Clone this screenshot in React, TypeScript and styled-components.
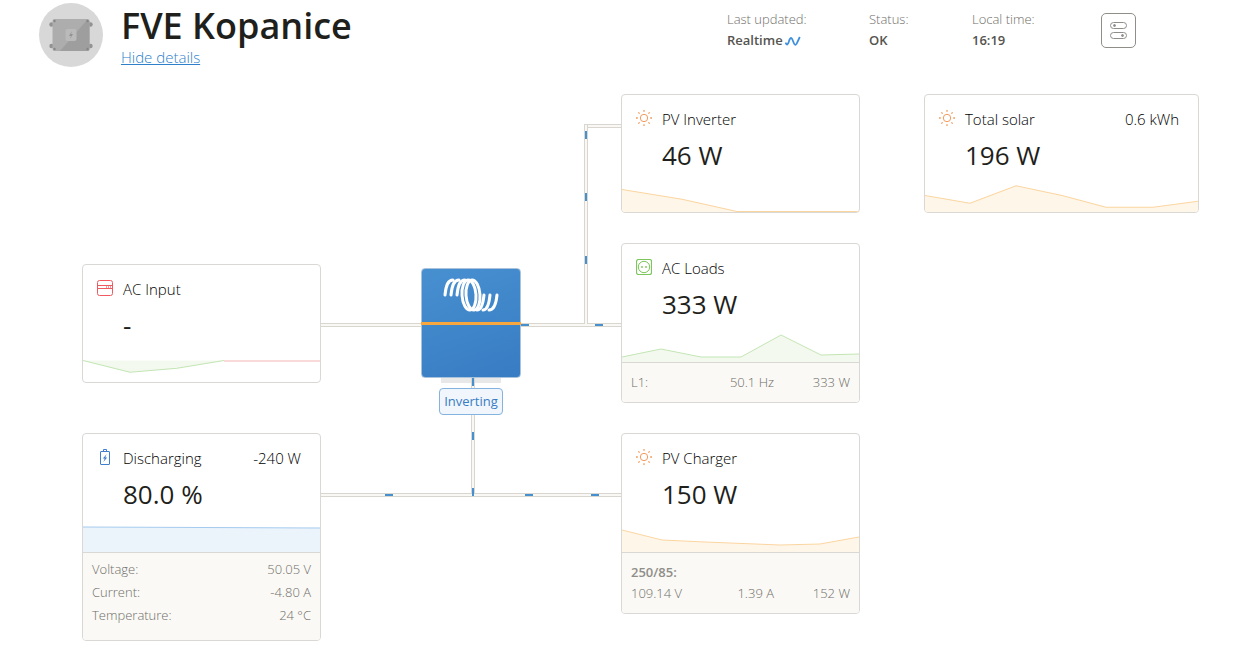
import React from "react";
import styled, { createGlobalStyle } from "styled-components";

const c = {
  text: "#1f1f1c",
  muted: "#6f6e69",
  dark: "#55544f",
  border: "#d9d8d5",
  footer: "#faf9f5",
  blue: "#4790d0",
};

const Global = createGlobalStyle`
  *, *::before, *::after { box-sizing: border-box; }
  body {
    margin: 0;
    background: #fff;
    color: ${c.text};
    font-family: "Open Sans", "Noto Sans", sans-serif;
  }
`;

const Header = styled.header`
  display: flex;
  justify-content: space-between;
  align-items: flex-start;
  padding: 3px 106px 0 39px;
`;

const Site = styled.div`
  display: flex;
  gap: 18px;
`;

const Title = styled.h1`
  margin: 0;
  font-size: 36px;
  line-height: 45px;
  font-weight: 600;
`;

const DetailsLink = styled.a`
  display: block;
  font-size: 15px;
  line-height: 19px;
  color: #2f7fcb;
  font-weight: 300;
`;

const Meta = styled.div`
  display: flex;
  padding-top: 6px;
`;

const MetaList = styled.dl`
  display: grid;
  grid-template-columns: 142px 103px 129px;
  margin: 0;
`;

const MetaItem = styled.div`
  font-size: 13px;
  line-height: 21px;
`;

const MetaLabel = styled.dt`
  color: ${c.muted};
  font-weight: 300;
`;

const MetaValue = styled.dd`
  display: flex;
  align-items: center;
  gap: 2px;
  margin: 0;
  font-weight: 600;
  color: ${c.dark};
`;

const ToggleButton = styled.button`
  display: grid;
  place-items: center;
  width: 35px;
  height: 35px;
  margin-top: 4px;
  padding: 0;
  border: 1px solid #8f8e89;
  border-radius: 5px;
  background: #fff;
`;

const Diagram = styled.main`
  display: grid;
  grid-template-columns: 239fr 300fr 239fr 64fr 275fr;
  padding: 27px 43px 15px 82px;
`;

const Column = styled.div<{ $offset?: number; $gap?: number }>`
  display: flex;
  flex-direction: column;
  gap: ${(p) => p.$gap ?? 0}px;
  padding-top: ${(p) => p.$offset ?? 0}px;
`;

const Card = styled.section`
  border: 1px solid ${c.border};
  border-radius: 4px;
  background: #fff;
  overflow: hidden;
`;

const Face = styled.div`
  display: flex;
  flex-direction: column;
  height: 118px;
  &:last-child {
    height: 117px;
  }
`;

const CardHead = styled.div`
  display: flex;
  align-items: flex-start;
  gap: 10px;
  padding: 13px 19px 0 14px;
  line-height: 22px;
  svg {
    flex: none;
    margin-top: 2px;
  }
`;

const CardTitle = styled.h2`
  flex: 1;
  margin: 0;
  font-size: 15px;
  font-weight: 300;
  color: #000;
`;

const CardExtra = styled.span`
  font-size: 15px;
  font-weight: 300;
  color: #000;
`;

const CardValue = styled.div`
  padding-left: 40px;
  font-size: 26px;
  line-height: 36px;
  margin-top: 7px;
`;

const ChartSvg = styled.svg`
  display: block;
  width: 100%;
  height: 40px;
  margin-top: auto;
`;

const Foot = styled.div<{ $top: number; $bottom: number }>`
  padding: ${(p) => p.$top}px 9px ${(p) => p.$bottom}px;
  border-top: 1px solid ${c.border};
  background: ${c.footer};
`;

const Readings = styled.table<{ $row: number }>`
  width: 100%;
  border-collapse: collapse;
  font-size: 13px;
  line-height: ${(p) => p.$row}px;
  color: ${c.muted};
  th,
  td {
    padding: 0;
    font-weight: 300;
    text-align: right;
  }
  th:first-child,
  td:first-child {
    text-align: left;
  }
  th:nth-child(3),
  td:nth-child(3) {
    width: 76px;
  }
  caption {
    text-align: left;
    font-weight: 600;
    color: #8f8e89;
  }
`;

const Links = styled.div`
  position: relative;
`;

const Wire = styled.div<{ $vertical?: boolean; $x: string; $y: number; $length: string }>`
  position: absolute;
  left: ${(p) => p.$x};
  top: ${(p) => p.$y}px;
  width: ${(p) => (p.$vertical ? "4px" : p.$length)};
  height: ${(p) => (p.$vertical ? p.$length : "4px")};
  background: #f9f8f4;
  border: 0 solid #d8d6ce;
  border-width: ${(p) => (p.$vertical ? "0 1px" : "1px 0")};
`;

const Pulse = styled.i<{ $vertical?: boolean; $at: string }>`
  position: absolute;
  left: ${(p) => (p.$vertical ? "0" : p.$at)};
  top: ${(p) => (p.$vertical ? p.$at : "0")};
  width: ${(p) => (p.$vertical ? 2 : 8)}px;
  height: ${(p) => (p.$vertical ? 8 : 2)}px;
  background: ${c.blue};
`;

const Inverter = styled.div`
  position: absolute;
  left: calc(50% - 50px);
  top: 174px;
  width: 100px;
  display: flex;
  flex-direction: column;
  align-items: center;
`;

const InverterBox = styled.div`
  width: 100px;
  height: 110px;
  border: 1px solid #a9c3dc;
  border-radius: 4px;
  background: linear-gradient(160deg, #4790d0, #387cc3);
`;

const InverterTop = styled.div`
  display: flex;
  justify-content: center;
  height: 56px;
  margin: 0 -1px;
  padding-top: 9px;
  border-bottom: 3px solid #f7a73e;
`;

const Foothold = styled.div`
  width: 60px;
  height: 5px;
  background: #e8e8e8;
`;

const StateBadge = styled.div`
  position: absolute;
  top: 294px;
  left: calc(50% - 32px);
  width: 64px;
  border: 1px solid #84b3e0;
  border-radius: 4px;
  background: #f0f6fc;
  color: #387cc3;
  font-size: 13px;
  line-height: 25px;
  text-align: center;
`;

type Tone = "orange" | "green" | "blue";
const tones: Record<Tone, [string, string]> = {
  orange: ["#fbd5a0", "#fff6ea"],
  green: ["#c3e5b4", "#f3f9ef"],
  blue: ["#a5cbee", "#ebf3fb"],
};

type Point = [number, number];

interface ChartProps {
  points: Point[];
  tone: Tone;
  width?: number;
  base?: number;
  tail?: string;
}

function Chart({ points, tone, width = 237, base = 40, tail }: ChartProps) {
  const [line, fill] = tones[tone];
  const path = points.map(([x, y]) => `${x},${y}`).join(" ");
  const last = points[points.length - 1][0];
  return (
    <ChartSvg viewBox={`0 0 ${width} 40`} preserveAspectRatio="none" aria-hidden="true">
      <polygon points={`0,${base} ${path} ${last},${base}`} fill={fill} />
      <polyline points={path} fill="none" stroke={line} vectorEffect="non-scaling-stroke" />
      {tail && (
        <line x1={last} x2={width} y1={base + 0.5} y2={base + 0.5} stroke={tail} vectorEffect="non-scaling-stroke" />
      )}
    </ChartSvg>
  );
}

const SunIcon = () => (
  <svg width="16" height="16" viewBox="0 0 16 16" fill="none" stroke="#f29b5c" aria-hidden="true">
    <circle cx="8" cy="8" r="3.7" />
    {[0, 45, 90, 135, 180, 225, 270, 315].map((a) => (
      <path key={a} d="M8 0v1.8" strokeWidth="1.3" transform={`rotate(${a} 8 8)`} />
    ))}
  </svg>
);

const GridIcon = () => (
  <svg width="16" height="16" viewBox="0 0 16 16" fill="none" stroke="#f0595f" aria-hidden="true">
    <rect x=".5" y=".5" width="15" height="15" rx="2" />
    <path d="M.5 5.5h15M.5 8.5h15" />
    <path d="M9.5 6v2M11.5 6v2M13.5 6v2" opacity=".6" />
  </svg>
);

const SocketIcon = () => (
  <svg width="16" height="16" viewBox="0 0 16 16" fill="none" stroke="#7cc65c" aria-hidden="true">
    <rect x=".5" y=".5" width="15" height="15" rx="2" strokeWidth="1.2" />
    <circle cx="8" cy="8" r="5.7" />
    <circle cx="6" cy="8" r=".9" fill="#7cc65c" stroke="none" />
    <circle cx="10" cy="8" r=".9" fill="#7cc65c" stroke="none" />
  </svg>
);

const BatteryIcon = () => (
  <svg width="16" height="16" viewBox="0 0 16 16" fill="none" stroke="#3f7fcd" aria-hidden="true">
    <rect x="3.5" y="2.5" width="9" height="13" rx=".5" />
    <path d="M6.5 2.5v-2h3v2" />
    <path d="M9.6 5.2 5.8 9.6h1.9L6.4 13l3.8-4.6H8.3z" fill="#3f7fcd" stroke="none" />
  </svg>
);

const RealtimeIcon = () => (
  <svg width="16" height="10" viewBox="0 0 16 10" fill="none" stroke="#3f8fdc" strokeWidth="1.8" aria-hidden="true">
    <path d="M.5 6.5C1.8 9.8 3 8.5 3.7 6 4.5 2.7 6 .3 7.4 3.5L8.8 7C10 10 11.5 9 12.4 6L14.8 1" />
  </svg>
);

const SwitchesIcon = () => (
  <svg width="18" height="18" viewBox="0 0 18 18" fill="none" stroke="#8f8e89" aria-hidden="true">
    <rect x=".5" y=".5" width="16" height="6" rx="3" />
    <rect x=".5" y="10.5" width="16" height="6" rx="3" />
    <circle cx="4.5" cy="3.5" r="1" fill="#8f8e89" />
    <circle cx="12.5" cy="13.5" r="1" fill="#8f8e89" />
  </svg>
);

const Avatar = () => (
  <svg width="64" height="64" viewBox="0 0 64 64" aria-hidden="true">
    <circle cx="32" cy="32" r="32" fill="#d8d8d8" />
    <g fill="#929292">
      <circle cx="12.5" cy="21.5" r="2.2" />
      <circle cx="51.5" cy="21.5" r="2.2" />
      <circle cx="12.5" cy="43" r="2.2" />
      <circle cx="51.5" cy="43" r="2.2" />
    </g>
    <rect x="13.5" y="16" width="37" height="32" rx="2" fill="#adadad" />
    <path d="M50.5 18v28a2 2 0 0 1-2 2H21L48 17z" fill="#9e9e9e" />
    <rect x="26.5" y="26" width="11" height="12" rx="2" fill="#bababa" />
    <path d="M33 28l-3 5h2l-1 3 3-5h-2z" fill="#929292" />
    <g fill="#858585">
      <circle cx="15.5" cy="18" r="1.2" />
      <circle cx="48.5" cy="18" r="1.2" />
      <circle cx="15.5" cy="46" r="1.2" />
      <circle cx="48.5" cy="46" r="1.2" />
    </g>
  </svg>
);

const WaveLogo = () => (
  <svg
    width="56"
    height="34"
    viewBox="0 0 56 34"
    fill="none"
    stroke="#fff"
    strokeWidth="3"
    strokeLinecap="round"
    role="img"
    aria-label="Manufacturer logo"
  >
    <path d="M2 17C3 7 5 2 10 2" />
    <path d="M8 17C9 7 11 2 16 2" />
    <path d="M14 17C15 7 17 2 22 2" />
    <ellipse cx="26" cy="17" rx="7" ry="15" transform="rotate(-4 26 17)" />
    <ellipse cx="30" cy="17" rx="7" ry="15" transform="rotate(-4 30 17)" />
    <path d="M34 32c4 0 6-5 7-15" />
    <path d="M40 32c4 0 6-5 7-15" />
    <path d="M46 32c4 0 7-5 8-15" />
  </svg>
);

export default function App() {
  return (
    <>
      <Global />
      <Header>
        <Site>
          <Avatar />
          <div>
            <Title>FVE Kopanice</Title>
            <DetailsLink href="#details">Hide details</DetailsLink>
          </div>
        </Site>
        <Meta>
          <MetaList>
            <MetaItem>
              <MetaLabel>Last updated:</MetaLabel>
              <MetaValue>Realtime <RealtimeIcon /></MetaValue>
            </MetaItem>
            <MetaItem>
              <MetaLabel>Status:</MetaLabel>
              <MetaValue>OK</MetaValue>
            </MetaItem>
            <MetaItem>
              <MetaLabel>Local time:</MetaLabel>
              <MetaValue>16:19</MetaValue>
            </MetaItem>
          </MetaList>
          <ToggleButton type="button" aria-label="Controls">
            <SwitchesIcon />
          </ToggleButton>
        </Meta>
      </Header>

      <Diagram>
        <Column $offset={170} $gap={50}>
          <Card>
            <Face>
              <CardHead><GridIcon /><CardTitle>AC Input</CardTitle></CardHead>
              <CardValue>-</CardValue>
              <Chart tone="green" base={18} tail="#f6b3b7" points={[[0, 18], [47, 30], [94, 26], [141, 18]]} />
            </Face>
          </Card>
          <Card>
            <Face>
              <CardHead><BatteryIcon /><CardTitle>Discharging</CardTitle><CardExtra>-240 W</CardExtra></CardHead>
              <CardValue>80.0 %</CardValue>
              <Chart tone="blue" points={[[0, 15], [237, 16]]} />
            </Face>
            <Foot $top={5} $bottom={13}>
              <Readings $row={23}>
                <tbody>
                  <tr><th scope="row">Voltage:</th><td>50.05 V</td></tr>
                  <tr><th scope="row">Current:</th><td>-4.80 A</td></tr>
                  <tr><th scope="row">Temperature:</th><td>24 °C</td></tr>
                </tbody>
              </Readings>
            </Foot>
          </Card>
        </Column>

        <Links>
          <Wire $x="0" $y={229} $length="100%">
            <Pulse $at="calc(50% + 50px)" />
            <Pulse $at="91.3%" />
          </Wire>
          <Wire $x="0" $y={399} $length="100%">
            <Pulse $at="21.3%" />
            <Pulse $at="68%" />
            <Pulse $at="90%" />
          </Wire>
          <Wire $x="calc(100% - 37px)" $y={30} $length="37px" />
          <Wire $vertical $x="calc(100% - 37px)" $y={31} $length="199px">
            <Pulse $vertical $at="6px" />
            <Pulse $vertical $at="68px" />
            <Pulse $vertical $at="131px" />
          </Wire>
          <Wire $vertical $x="50%" $y={284} $length="116px">
            <Pulse $vertical $at="54px" />
            <Pulse $vertical $at="110px" />
          </Wire>
          <Inverter>
            <InverterBox>
              <InverterTop><WaveLogo /></InverterTop>
            </InverterBox>
            <Foothold />
          </Inverter>
          <Wire $vertical $x="50%" $y={284} $length="10px">
            <Pulse $vertical $at="0" />
          </Wire>
          <StateBadge>Inverting</StateBadge>
        </Links>

        <Column $gap={30}>
          <Card>
            <Face>
              <CardHead><SunIcon /><CardTitle>PV Inverter</CardTitle></CardHead>
              <CardValue>46 W</CardValue>
              <Chart tone="orange" points={[[0, 17], [60, 27], [115, 39.5], [237, 39.5]]} />
            </Face>
          </Card>
          <Card>
            <Face>
              <CardHead><SocketIcon /><CardTitle>AC Loads</CardTitle></CardHead>
              <CardValue>333 W</CardValue>
              <Chart tone="green" points={[[0, 35], [39, 27], [79, 35], [119, 35], [159, 13], [199, 33], [237, 32]]} />
            </Face>
            <Foot $top={8} $bottom={8}>
              <Readings $row={23}>
                <tbody>
                  <tr><th scope="row">L1:</th><td>50.1 Hz</td><td>333 W</td></tr>
                </tbody>
              </Readings>
            </Foot>
          </Card>
          <Card>
            <Face>
              <CardHead><SunIcon /><CardTitle>PV Charger</CardTitle></CardHead>
              <CardValue>150 W</CardValue>
              <Chart tone="orange" points={[[0, 18], [40, 28], [83, 30], [158, 33], [198, 32], [237, 25]]} />
            </Face>
            <Foot $top={9} $bottom={9}>
              <Readings $row={21}>
                <caption>250/85:</caption>
                <tbody>
                  <tr><td>109.14 V</td><td>1.39 A</td><td>152 W</td></tr>
                </tbody>
              </Readings>
            </Foot>
          </Card>
        </Column>

        <div />

        <Column>
          <Card>
            <Face>
              <CardHead><SunIcon /><CardTitle>Total solar</CardTitle><CardExtra>0.6 kWh</CardExtra></CardHead>
              <CardValue>196 W</CardValue>
              <Chart tone="orange" width={273} points={[[0, 23], [45, 31], [91, 13], [137, 23], [181, 35], [228, 35], [273, 29]]} />
            </Face>
          </Card>
        </Column>
      </Diagram>
    </>
  );
}
